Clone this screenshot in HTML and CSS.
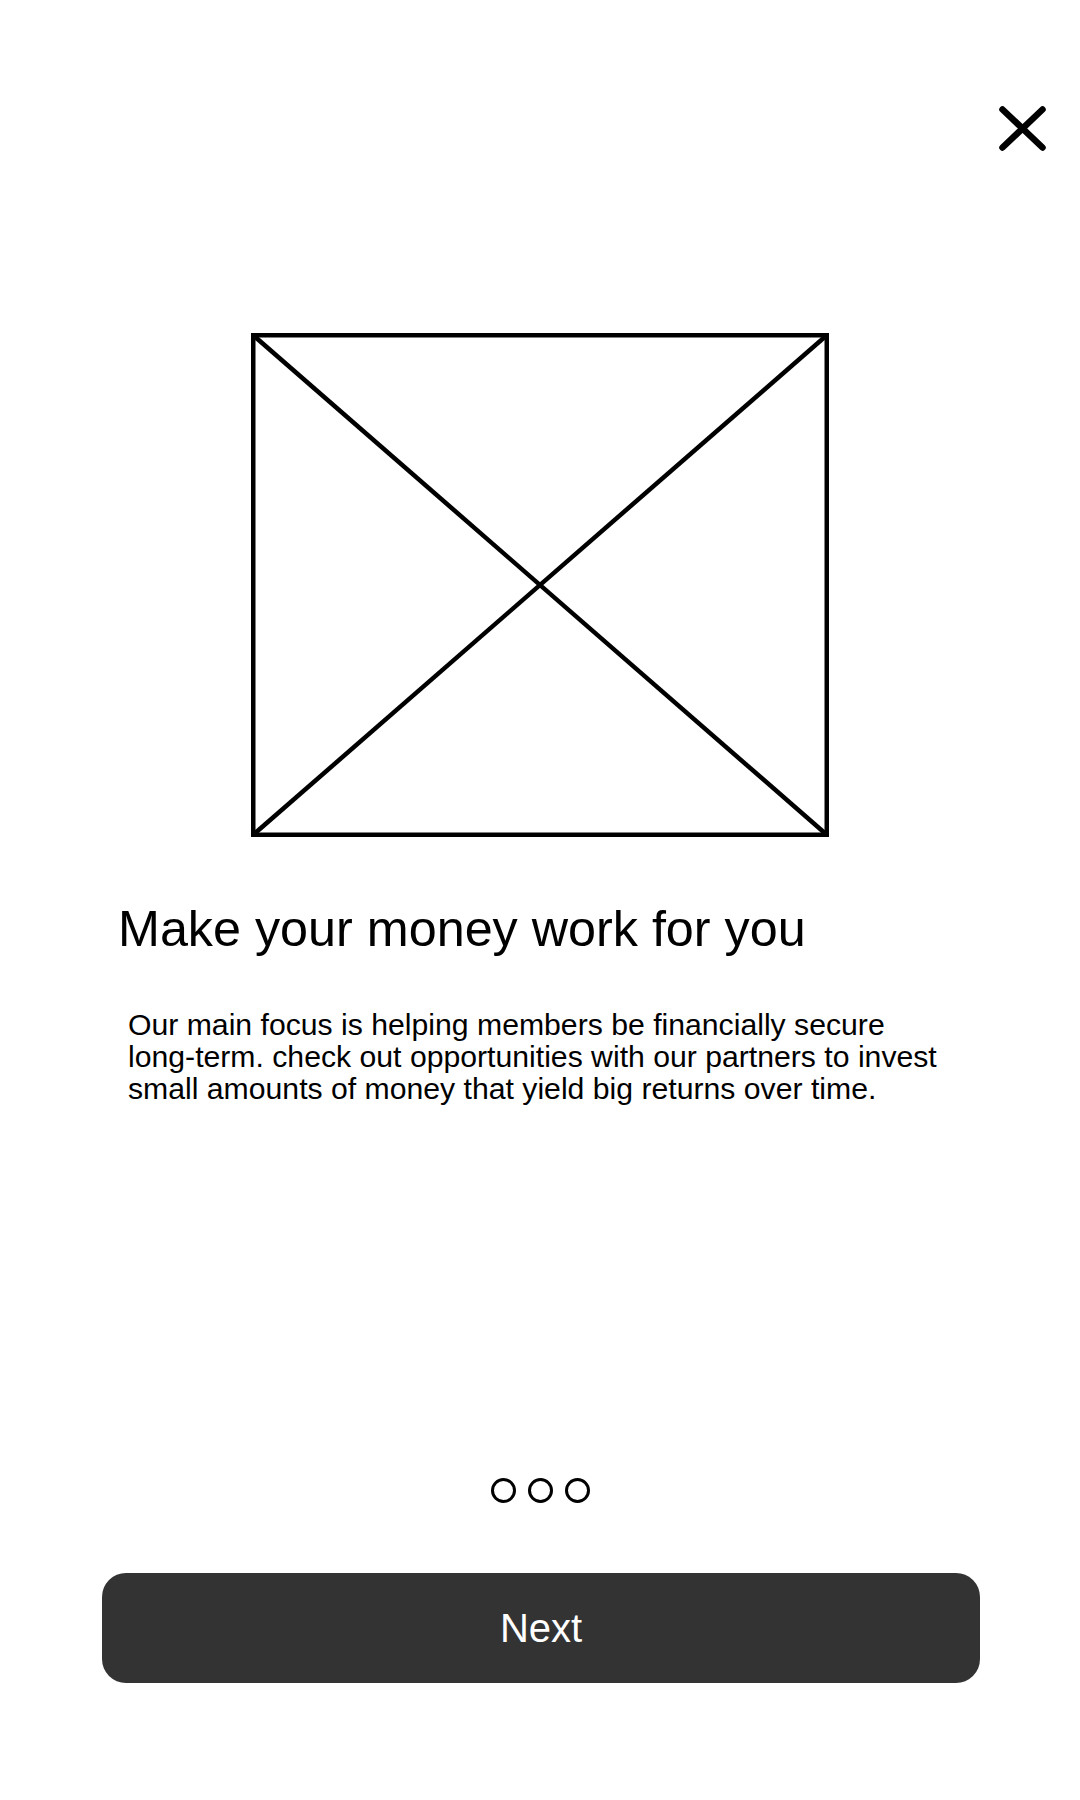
FILE: index.html
```html
<!DOCTYPE html>
<html lang="en">
<head>
<meta charset="utf-8">
<title>Onboarding</title>
<link rel="stylesheet" href="styles.css">
</head>
<body>
<div class="screen">
  <header class="topbar">
    <button class="close" aria-label="Close">
      <svg width="47" height="45" viewBox="0 0 47 45">
        <line x1="3.5" y1="3.5" x2="43.5" y2="41.5" />
        <line x1="43.5" y1="3.5" x2="3.5" y2="41.5" />
      </svg>
    </button>
  </header>
  <div class="hero">
    <svg class="placeholder" width="578" height="504" viewBox="0 0 578 504">
      <rect x="2.25" y="2.25" width="573.5" height="499.5" />
      <line x1="2.25" y1="2.25" x2="575.75" y2="501.75" />
      <line x1="575.75" y1="2.25" x2="2.25" y2="501.75" />
    </svg>
  </div>
  <h1 class="title">Make your money work for you</h1>
  <p class="desc">Our main focus is helping members be financially secure <span class="nowrap">long-term.</span> check out opportunities with our partners to invest small amounts of money that yield big returns over time.</p>
  <div class="dots">
    <span class="dot"></span>
    <span class="dot"></span>
    <span class="dot"></span>
  </div>
  <button class="next">Next</button>
</div>
</body>
</html>
```

FILE: styles.css
```css
* {
  box-sizing: border-box;
}

html, body {
  margin: 0;
  padding: 0;
  background: #ffffff;
}

body {
  font-family: "Liberation Sans", Arial, sans-serif;
  color: #000000;
}

.screen {
  width: 1080px;
  min-height: 1800px;
  display: flex;
  flex-direction: column;
}

.topbar {
  display: flex;
  justify-content: flex-end;
  padding: 106px 34px 0 0;
}

.close {
  display: block;
  padding: 0;
  margin: 0;
  border: 0;
  background: none;
  line-height: 0;
  cursor: pointer;
}

.close svg line {
  stroke: #000000;
  stroke-width: 6.5;
  stroke-linecap: round;
}

.hero {
  display: flex;
  justify-content: center;
  margin-top: 182px;
}

.placeholder {
  display: block;
}

.placeholder rect,
.placeholder line {
  fill: none;
  stroke: #000000;
  stroke-width: 4.5;
}

.title {
  margin: 67px 0 0 118px;
  font-size: 50.3px;
  line-height: 50px;
  font-weight: normal;
}

.desc {
  margin: 55px 0 0 128px;
  max-width: 830px;
  font-size: 30.2px;
  line-height: 32px;
}

.nowrap {
  white-space: nowrap;
}

.dots {
  display: flex;
  justify-content: center;
  gap: 12px;
  margin-top: 373px;
}

.dot {
  width: 25px;
  height: 25px;
  border: 3.5px solid #000000;
  border-radius: 50%;
}

.next {
  display: block;
  width: 878px;
  height: 110px;
  margin: 70px 0 0 102px;
  border: 0;
  border-radius: 24px;
  background: #333333;
  color: #ffffff;
  font-family: "Liberation Sans", Arial, sans-serif;
  font-size: 40px;
  cursor: pointer;
}
```
